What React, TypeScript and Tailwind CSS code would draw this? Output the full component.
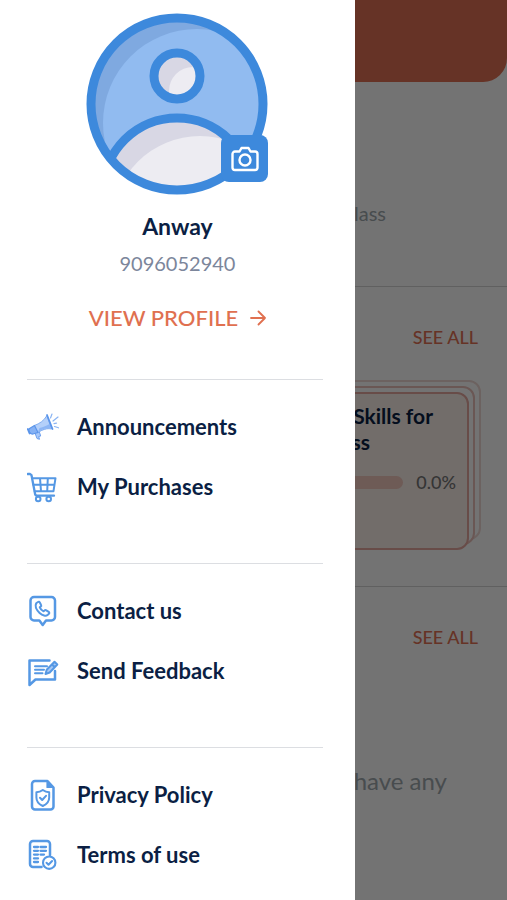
import type { ReactNode } from "react";

function Icon({ children }: { children: ReactNode }) {
  return (
    <svg
      viewBox="1 0 32 32"
      className="size-8 shrink-0"
      fill="none"
      stroke="#5598e4"
      strokeWidth="2.5"
      strokeLinecap="round"
      strokeLinejoin="round"
      aria-hidden="true"
    >
      {children}
    </svg>
  );
}

const MegaphoneIcon = () => (
  <Icon>
    <path d="M9 22l2 5.500 2.500 .8-.8-2.800 2-.5-1.500-4.500z" fill="#a9c9fa" stroke="#6da0ee" strokeWidth="1" />
    <path d="M8.500 14.500C14 12.500 18 9.500 21 4.500l4.500 13.500c-4.500-1-9 .5-13.500 3.500z" fill="#b4d0fa" stroke="#7dabf0" strokeWidth="1" />
    <path d="M13.500 17c4-.8 7-2.500 10-4l1.500 4.500c-4.500-1-9 .5-13 3.500z" fill="#8db6f5" stroke="none" />
    <path d="M3.500 17.500l5-3 3.500 7-5 1.500c-3 .6-5.500-4-3.500-5.500z" fill="#85b1f4" stroke="#5b95ea" strokeWidth="1.200" />
    <path d="M1.800 18l1.800 4.500" stroke="#5b95ea" strokeWidth="1.800" />
    <path d="M21 4l5.500 14" stroke="#5b95ea" strokeWidth="1.800" />
    <path d="M24.500 7l1.500-4M27 10l5-4M28 12.700l2.500-.5M28.500 15.500l4 1.300" stroke="#8ab4f3" strokeWidth="1.200" />
  </Icon>
);

const CartIcon = () => (
  <Icon>
    <path d="M1.800 3h2.300l1.400 1.200L9 22.500a2.200 2.200 0 0 0 2 2.200h17" strokeWidth="2.300" />
    <path d="M6 7.200h23.500l-2 13H8.700M7.300 13.700h21M14 7.200l1 13M21.800 7.200l-.6 13" strokeWidth="2" />
    <circle cx="12.200" cy="28" r="2.300" strokeWidth="2" />
    <circle cx="22.700" cy="28" r="2.300" strokeWidth="2" />
  </Icon>
);

const ContactIcon = () => (
  <Icon>
    <path d="M8 2h17.500a3.500 3.500 0 0 1 3.500 3.500v16.500a3.500 3.500 0 0 1-3.500 3.500h-5.500l-3.300 4.500-3.300-4.500H8a3.500 3.500 0 0 1-3.500-3.500V5.500A3.500 3.500 0 0 1 8 2z" />
    <path
      d="M10.200 8.300l1.800-1.300c.7-.5 1.400-.2 1.800.5l1.300 2.400c.4.700.1 1.300-.5 1.700l-.8.700c.7 1.900 2 3.200 3.800 4l.9-.8c.5-.5 1.200-.6 1.800-.2l2.400 1.600c.7.500.8 1.200.2 1.800l-1.400 1.400c-1.500 1.300-4.900.6-7.900-2.200s-4.900-6.500-3.400-9.600z"
      strokeWidth="2"
    />
  </Icon>
);

const FeedbackIcon = () => (
  <Icon>
    <path d="M23.500 5.500H3.500v24.500l6-5.500h19.500v-8.500" />
    <path d="M9 11.300h12M9 14.800h9M9 18.200h7.500" strokeWidth="2" />
    <path d="M19.500 19l1.200-4.200 7.800-8 2.800 2.700-7.600 8zM26 9.500l2.600 2.500" fill="#a9c9f5" strokeWidth="2" />
  </Icon>
);

const PrivacyIcon = () => (
  <Icon>
    <path d="M9 2h12.500l6 6.500v19a3 3 0 0 1-3 3H9a3 3 0 0 1-3-3V5a3 3 0 0 1 3-3z" />
    <path d="M21 2.500v6h6z" fill="#5598e4" strokeWidth="1.200" />
    <path d="M16.800 11c2 1.500 4 2.200 6.400 2.300v5.200c0 4-2.500 6.800-6.400 8.500-3.900-1.700-6.400-4.500-6.400-8.500v-5.200c2.400-.1 4.400-.8 6.400-2.300z" strokeWidth="2" />
    <path d="M14 18.700l2.200 2.300 3.800-4.200" strokeWidth="2" />
  </Icon>
);

const TermsIcon = () => (
  <Icon>
    <path d="M15.500 28H7a3 3 0 0 1-3-3V5a3 3 0 0 1 3-3h14a3 3 0 0 1 3 3v11" />
    <path d="M8 8h4M14.500 8h5.500M8 11.800h4M14.500 11.800h5.500M8 15.600h4M14.500 15.600h3.500M8 19.400h4M8 23h4" strokeWidth="2.300" />
    <circle cx="23.200" cy="23.700" r="6.200" strokeWidth="2.100" />
    <path d="M20.500 23.800l2 2 3.600-3.800" strokeWidth="2" />
  </Icon>
);

function Avatar() {
  return (
    <svg viewBox="0 0 182 182" className="size-full" role="img" aria-label="Profile picture">
      <defs>
        <clipPath id="disc">
          <circle cx="91" cy="91" r="88" />
        </clipPath>
        <clipPath id="head">
          <circle cx="91" cy="63" r="23" />
        </clipPath>
        <clipPath id="shoulders">
          <circle cx="91" cy="179" r="74" />
        </clipPath>
      </defs>
      <g clipPath="url(#disc)">
        <rect width="182" height="182" fill="#7fa9e0" />
        <circle cx="111" cy="110" r="94" fill="#91bbf0" />
        <circle cx="91" cy="179" r="74" fill="#d8d7e4" />
        <circle cx="114" cy="211" r="88" fill="#edecf2" clipPath="url(#shoulders)" />
        <circle cx="91" cy="179" r="74" fill="none" stroke="#3d89dc" strokeWidth="9" />
      </g>
      <circle cx="91" cy="63" r="23" fill="#d8d7e4" />
      <circle cx="107" cy="78" r="24" fill="#edecf2" clipPath="url(#head)" />
      <circle cx="91" cy="63" r="23" fill="none" stroke="#3d89dc" strokeWidth="9" />
      <circle cx="91" cy="91" r="86" fill="none" stroke="#3d89dc" strokeWidth="9" />
    </svg>
  );
}

const menu = [
  [
    { label: "Announcements", icon: <MegaphoneIcon /> },
    { label: "My Purchases", icon: <CartIcon /> },
  ],
  [
    { label: "Contact us", icon: <ContactIcon /> },
    { label: "Send Feedback", icon: <FeedbackIcon /> },
  ],
  [
    { label: "Privacy Policy", icon: <PrivacyIcon /> },
    { label: "Terms of use", icon: <TermsIcon /> },
  ],
];

function Drawer() {
  return (
    <aside className="absolute inset-y-0 left-0 w-[70%] bg-white">
      <header className="flex flex-col items-center pt-[13px] pb-[47px]">
        <div className="relative size-[182px]">
          <Avatar />
          <button
            type="button"
            aria-label="Change photo"
            className="absolute right-0 bottom-[13px] flex size-[47px] items-center justify-center rounded-lg bg-[#3d89dc]"
          >
            <svg viewBox="0 0 28 26" className="h-[26px] w-7" fill="none" stroke="#fff" strokeWidth="2.400" strokeLinejoin="round" aria-hidden="true">
              <path d="M4 5.500h4.500l2-3.500h7l2 3.500H24a2.500 2.500 0 0 1 2.500 2.500v13.500a2.500 2.500 0 0 1-2.500 2.500H4a2.500 2.500 0 0 1-2.500-2.500V8A2.500 2.500 0 0 1 4 5.500z" />
              <circle cx="14" cy="14" r="5.500" />
            </svg>
          </button>
        </div>
        <h1 className="mt-[17px] text-[23px] leading-7 font-bold">Anway</h1>
        <p className="mt-[11px] text-xl leading-6 text-[#7c869b]">9096052940</p>
        <a href="#profile" className="mt-[29px] flex items-center gap-3 text-[22px] leading-7 font-medium text-[#e07050]">
          VIEW PROFILE
          <svg viewBox="0 0 16 16" className="size-4" fill="none" stroke="currentColor" strokeWidth="1.800" strokeLinecap="round" strokeLinejoin="round" aria-hidden="true">
            <path d="M1 8h14M8.500 1.500L15 8l-6.500 6.500" />
          </svg>
        </a>
      </header>
      <nav className="mr-8 ml-[27px]">
        {menu.map((group, i) => (
          <ul key={i} className="border-t border-[#dcdee2] pt-[17px] pb-[46px]">
            {group.map((item) => (
              <li key={item.label}>
                <a href="#menu" className="flex h-[60px] items-center gap-[18px] text-[22px] leading-7 font-bold">
                  {item.icon}
                  {item.label}
                </a>
              </li>
            ))}
          </ul>
        ))}
      </nav>
    </aside>
  );
}

function SeeAll() {
  return (
    <div className="flex h-[100px] items-center justify-end pr-[29px]">
      <a href="#all" className="text-lg leading-6 font-medium text-[#e37154]">
        SEE ALL
      </a>
    </div>
  );
}

function HomePage() {
  return (
    <main className="flex min-h-screen flex-col bg-white">
      <div className="h-[82px] rounded-br-3xl bg-[#e37154]" />
      <section className="flex h-[204px] flex-col justify-end pb-[61px] text-right">
        <p className="pr-[121px] text-xl leading-6 text-[#a0a9ae]">class</p>
      </section>
      <section className="h-[300px] border-t border-[#d5d5d5]">
        <SeeAll />
        <div className="relative mt-[5px] mr-[38px] h-[158px]">
          <div className="absolute -top-3 -right-3 bottom-[10px] left-0 rounded-xl border-2 border-[#f0d9d5] bg-white" />
          <div className="absolute -top-1.5 -right-1.5 bottom-[5px] left-0 rounded-xl border-2 border-[#ecc0ba] bg-white" />
          <article className="relative h-full rounded-xl border-2 border-[#e6a8a0] bg-[#fdf2ec] pt-[9px] text-right">
            <h2 className="text-[21px] leading-[26px] font-bold">
              <span className="block pr-[34px]">Skills for</span>
              <span className="block pr-[97px]">Business</span>
            </h2>
            <div className="mt-[15px] flex items-center justify-end gap-[13px] pr-[11px]">
              <div className="h-[13px] flex-1 rounded-full bg-[#f3c9bf]" />
              <span className="text-lg leading-6 font-medium text-[#777]">0.0%</span>
            </div>
          </article>
        </div>
      </section>
      <section className="flex-1 border-t border-[#d5d5d5] text-right">
        <SeeAll />
        <p className="mt-20 pr-[60px] text-2xl leading-7 text-[#a0a9ae]">have any</p>
      </section>
    </main>
  );
}

export default function App() {
  return (
    <div className="relative overflow-hidden font-['Lato','Open_Sans',sans-serif] text-[#0b1f44]">
      <HomePage />
      <div className="absolute inset-0 bg-black/55" />
      <Drawer />
    </div>
  );
}
